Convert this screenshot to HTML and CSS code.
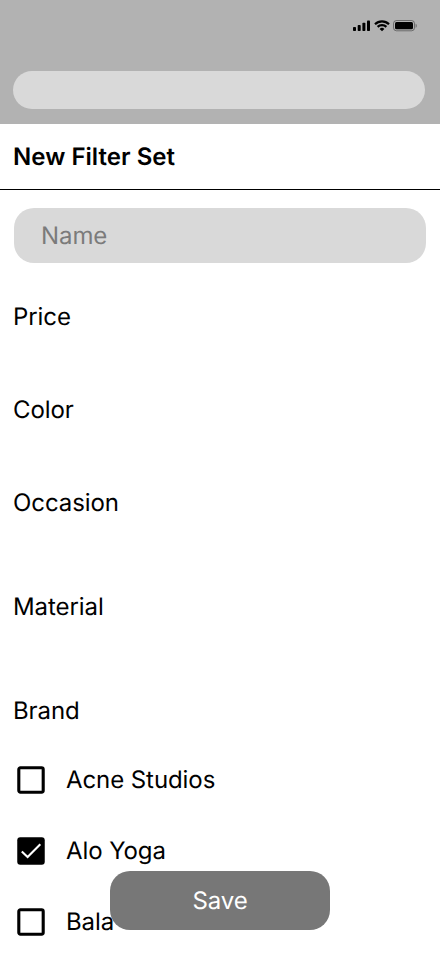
FILE: index.html
```html
<!DOCTYPE html>
<html lang="en">
<head>
<meta charset="utf-8">
<title>New Filter Set</title>
<link rel="stylesheet" href="styles.css">
</head>
<body>
<div class="screen">
  <header class="backdrop">
    <div class="status">
      <svg width="64" height="12" viewBox="0 0 64 12">
        <rect x="0" y="7" width="3" height="4" rx="0.8"/>
        <rect x="4.7" y="5" width="3" height="6" rx="0.8"/>
        <rect x="9.4" y="2.7" width="3" height="8.3" rx="0.8"/>
        <rect x="14" y="0.4" width="3" height="10.6" rx="0.8"/>
        <g fill="none" stroke="#000" stroke-width="2.2"><path d="M22 4.2a10 10 0 0 1 14 0"/><path d="M24.6 6.9a6.3 6.3 0 0 1 8.8 0"/></g>
        <path d="M26.6 8.9a3.5 3.5 0 0 1 4.8 0L29 11.3z"/>
        <rect x="40.5" y="0.5" width="21" height="10.3" rx="3" fill="none" stroke="#000" stroke-opacity=".4"/>
        <rect x="42" y="2" width="18" height="7.3" rx="1.5"/>
        <path d="M62.6 3.7v4c1.6-.8 1.6-3.2 0-4z" fill-opacity=".4"/>
      </svg>
    </div>
    <div class="search"></div>
  </header>
  <main class="sheet">
    <h1 class="title">New Filter Set</h1>
    <div class="form">
      <input class="name" type="text" placeholder="Name" aria-label="Name">
      <h2 class="section price">Price</h2>
      <h2 class="section color">Color</h2>
      <h2 class="section occasion">Occasion</h2>
      <h2 class="section material">Material</h2>
      <h2 class="section brand">Brand</h2>
      <ul class="brands">
        <li class="option"><svg class="box" viewBox="0 0 28 28"><rect x="1.8" y="1.8" width="24.4" height="24.4" rx="1.6" fill="none" stroke="#000" stroke-width="3.1"/></svg>Acne Studios</li>
        <li class="option"><svg class="box" viewBox="0 0 28 28"><rect x=".25" y=".25" width="27.5" height="27.5" rx="3"/><path d="M4.8 14.4l5.8 5.6L23.3 7.3" fill="none" stroke="#fff" stroke-width="2.1"/></svg>Alo Yoga</li>
        <li class="option"><svg class="box" viewBox="0 0 28 28"><rect x="1.8" y="1.8" width="24.4" height="24.4" rx="1.6" fill="none" stroke="#000" stroke-width="3.1"/></svg>Bala</li>
      </ul>
    </div>
  </main>
  <button class="save">Save</button>
</div>
</body>
</html>
```
FILE: styles.css
```css
* { box-sizing: border-box; }
body { margin: 0; font-family: Inter, sans-serif; font-size: 24px; line-height: 29px; letter-spacing: -.08px; color: #000; background: #fff; text-rendering: geometricPrecision; }
.screen { position: relative; height: 956px; overflow: hidden; }
.backdrop { height: 124px; background: #b2b2b2; padding: 20px 15px 0 13px; }
.status { display: flex; justify-content: flex-end; height: 51px; padding-right: 8px; }
.search { height: 38px; border-radius: 19px; background: #d9d9d9; }
.title { margin: 0; height: 66px; padding: 18px 13px 0; border-bottom: 1px solid #000; font-size: 24px; font-weight: 600; letter-spacing: .04px; }
.form { padding: 18px 13px 0; }
.name { display: block; width: 412px; height: 55px; margin-left: 1px; padding: 0 27px; border: 0; border-radius: 20px; background: #d9d9d9; font: inherit; letter-spacing: inherit; text-rendering: inherit; }
.name::placeholder { color: #7b7b7b; opacity: 1; }
.section { margin: 0; font-size: 24px; font-weight: 400; }
.price { margin-top: 39px; }
.color, .occasion { margin-top: 64px; }
.material, .brand { margin-top: 75px; }
.brands { list-style: none; margin: 40px 0 0; padding: 0 0 0 4px; display: flex; flex-direction: column; gap: 42px; }
.option { display: flex; align-items: center; gap: 21px; height: 29px; }
.box { width: 28px; height: 28px; }
.save { position: absolute; left: 110px; top: 871px; width: 220px; height: 59px; border: 0; border-radius: 20px; background: #777; color: #fff; font: inherit; letter-spacing: inherit; text-rendering: inherit; padding: 0; }
```
